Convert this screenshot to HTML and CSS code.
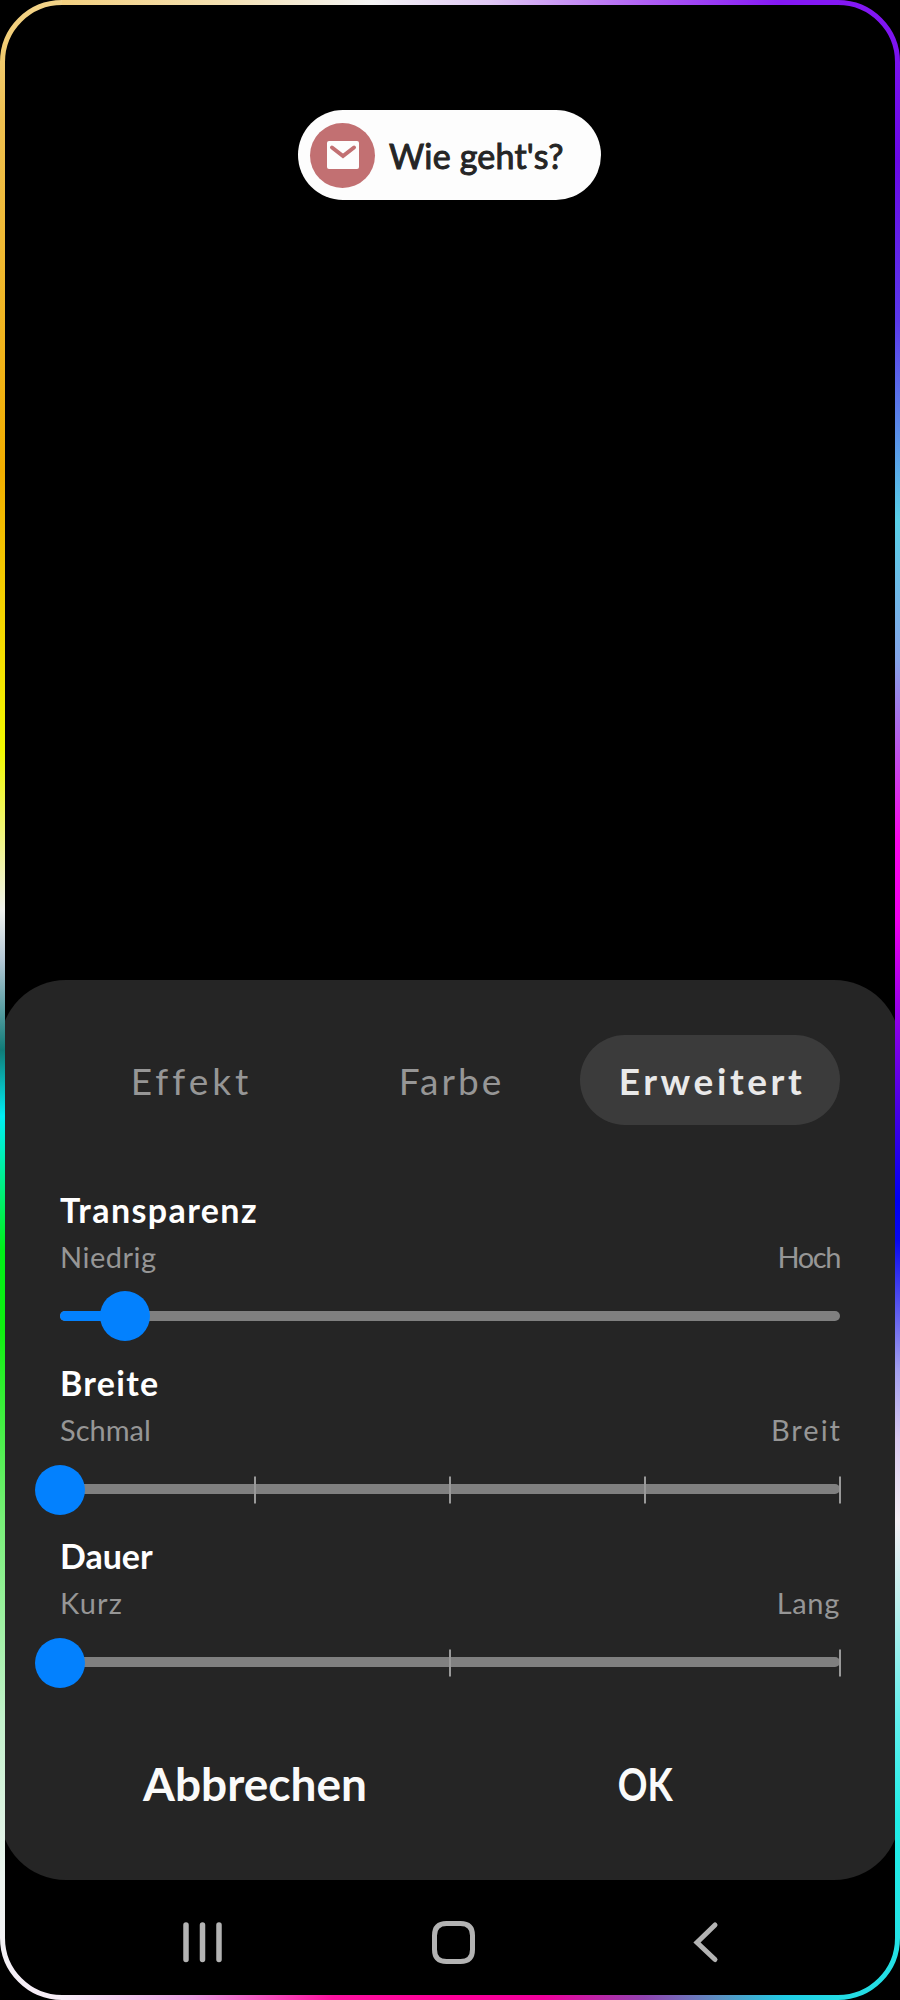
FILE: index.html
```html
<!DOCTYPE html>
<html lang="de">
<head>
<meta charset="utf-8">
<title>Edge-Beleuchtung</title>
<link rel="stylesheet" href="styles.css">
</head>
<body>
<div class="phone">
  <div class="preview">
    <div class="toast">
      <span class="toast-icon">
        <svg width="34" height="30" viewBox="0 0 34 30"><rect x="1" y="1" width="32" height="28" rx="2" fill="#fdfdfd"/><path d="M6 7.500L17 16L28 7.500" fill="none" stroke="#c27072" stroke-width="4" stroke-linecap="round"/></svg>
      </span>
      <span class="toast-text">Wie geht's?</span>
    </div>
  </div>

  <main class="sheet">
    <nav class="tabs">
      <button class="tab t-effekt"><span>Effekt</span></button>
      <button class="tab t-farbe"><span>Farbe</span></button>
      <button class="tab t-erweitert active"><span>Erweitert</span></button>
    </nav>

    <section class="setting">
      <h2 class="name n-transparenz">Transparenz</h2>
      <div class="range"><span class="l-niedrig">Niedrig</span><span class="l-hoch">Hoch</span></div>
      <svg class="slider" width="832" height="54" viewBox="0 0 832 54">
        <rect x="26" y="22" width="780" height="10" rx="5" fill="#808080"/>
        <rect x="26" y="22" width="70" height="10" rx="5" fill="#0381fe"/>
        <circle cx="91" cy="27" r="25" fill="#0381fe"/>
      </svg>
    </section>

    <section class="setting">
      <h2 class="name n-breite">Breite</h2>
      <div class="range"><span class="l-schmal">Schmal</span><span class="l-breit">Breit</span></div>
      <svg class="slider" width="832" height="54" viewBox="0 0 832 54">
        <rect x="26" y="22" width="780" height="10" rx="5" fill="#808080"/>
        <path d="M221 14.500V41.500M416 14.500V41.500M611 14.500V41.500M806 14.500V41.500" stroke="#999" stroke-width="2"/>
        <circle cx="26" cy="28" r="25" fill="#0381fe"/>
      </svg>
    </section>

    <section class="setting">
      <h2 class="name n-dauer">Dauer</h2>
      <div class="range"><span class="l-kurz">Kurz</span><span class="l-lang">Lang</span></div>
      <svg class="slider" width="832" height="54" viewBox="0 0 832 54">
        <rect x="26" y="22" width="780" height="10" rx="5" fill="#808080"/>
        <path d="M416 14.500V41.500M806 14.500V41.500" stroke="#999" stroke-width="2"/>
        <circle cx="26" cy="28" r="25" fill="#0381fe"/>
      </svg>
    </section>

    <div class="actions">
      <button class="action a-cancel"><span>Abbrechen</span></button>
      <button class="action a-ok"><span>OK</span></button>
    </div>
  </main>

  <footer class="navbar">
    <svg width="42" height="44" viewBox="0 0 42 44"><path d="M5 4V38.500M21.500 4V38.500M38 4V38.500" stroke="#b3b3b3" stroke-width="5.500" stroke-linecap="round"/></svg>
    <svg width="46" height="46" viewBox="0 0 46 46"><path d="M14.500 2.500H28.500Q40.500 2.500 40.500 14.500V28.500Q40.500 40.500 28.500 40.500H14.500Q2.500 40.500 2.500 28.500V14.500Q2.500 2.500 14.500 2.500Z" fill="none" stroke="#b3b3b3" stroke-width="5"/></svg>
    <svg width="28" height="44" viewBox="0 0 28 44"><path d="M24 4L6 21.500L24 38.500" fill="none" stroke="#b3b3b3" stroke-width="5" stroke-linecap="round"/></svg>
  </footer>

  <svg class="edge" width="900" height="2000" viewBox="0 0 900 2000" fill="none" stroke-width="5">
    <defs>
      <linearGradient id="left" gradientUnits="userSpaceOnUse" x1="0" y1="0" x2="0" y2="2000">
        <stop offset="0" stop-color="#f3d48a"/><stop offset=".06" stop-color="#efc050"/><stop offset=".235" stop-color="#f2ae00"/><stop offset=".33" stop-color="#f6e000"/><stop offset=".375" stop-color="#f2fa00"/><stop offset=".455" stop-color="#f0f2ee"/><stop offset=".48" stop-color="#b4c8d6"/><stop offset=".525" stop-color="#107c78"/><stop offset=".558" stop-color="#00eef4"/><stop offset=".575" stop-color="#00f0c0"/><stop offset=".625" stop-color="#00f018"/><stop offset=".665" stop-color="#10f010"/><stop offset=".76" stop-color="#78f078"/><stop offset=".86" stop-color="#c4f2cc"/><stop offset=".94" stop-color="#ecf4f0"/><stop offset="1" stop-color="#f8eef8"/>
      </linearGradient>
      <linearGradient id="right" gradientUnits="userSpaceOnUse" x1="0" y1="0" x2="0" y2="2000">
        <stop offset="0" stop-color="#8418f4"/><stop offset=".08" stop-color="#6a08e6"/><stop offset=".16" stop-color="#5a38ea"/><stop offset=".26" stop-color="#58d0e8"/><stop offset=".33" stop-color="#84a4e8"/><stop offset=".42" stop-color="#f808e8"/><stop offset=".46" stop-color="#ee00ea"/><stop offset=".5" stop-color="#a000e8"/><stop offset=".555" stop-color="#4800e4"/><stop offset=".6" stop-color="#0000f2"/><stop offset=".62" stop-color="#0808ee"/><stop offset=".685" stop-color="#a4a0ee"/><stop offset=".72" stop-color="#dccaf0"/><stop offset=".76" stop-color="#f4eef4"/><stop offset=".8" stop-color="#c0f0ee"/><stop offset=".86" stop-color="#60f0ee"/><stop offset=".91" stop-color="#20eee8"/><stop offset="1" stop-color="#24dce4"/>
      </linearGradient>
      <linearGradient id="top" gradientUnits="userSpaceOnUse" x1="60" y1="0" x2="840" y2="0">
        <stop offset="0" stop-color="#f3d080"/><stop offset=".2" stop-color="#f4e0b0"/><stop offset=".4" stop-color="#f4f4f4"/><stop offset=".55" stop-color="#e0c8f4"/><stop offset=".75" stop-color="#b060f4"/><stop offset=".92" stop-color="#8418f4"/><stop offset="1" stop-color="#8418f4"/>
      </linearGradient>
      <linearGradient id="bottom" gradientUnits="userSpaceOnUse" x1="60" y1="0" x2="840" y2="0">
        <stop offset="0" stop-color="#f8eef8"/><stop offset=".17" stop-color="#eca0e0"/><stop offset=".35" stop-color="#fc14a0"/><stop offset=".5" stop-color="#ff0098"/><stop offset=".62" stop-color="#f0009c"/><stop offset=".75" stop-color="#9044b0"/><stop offset=".85" stop-color="#5894c4"/><stop offset=".93" stop-color="#20cce4"/><stop offset="1" stop-color="#24dce4"/>
      </linearGradient>
    </defs>
    <path d="M62 2.500A59.500 59.500 0 0 0 2.500 62V1938A59.500 59.500 0 0 0 62 1997.500" stroke="url(#left)"/>
    <path d="M838 2.500A59.500 59.500 0 0 1 897.500 62V1938A59.500 59.500 0 0 1 838 1997.500" stroke="url(#right)"/>
    <rect x="62" y="0" width="776" height="5" fill="url(#top)"/>
    <rect x="62" y="1995" width="776" height="5" fill="url(#bottom)"/>
  </svg>
</div>
</body>
</html>
```
FILE: styles.css
```css
* { box-sizing: border-box; }
body { margin: 0; background: #000; font-family: Lato, "Open Sans", sans-serif; }
button { font: inherit; border: 0; background: none; padding: 0; color: inherit; white-space: nowrap; }

.phone { position: relative; width: 900px; height: 2000px; overflow: hidden; background: #000; display: flex; flex-direction: column; }
.edge { position: absolute; inset: 0; pointer-events: none; }

.preview { height: 980px; padding: 110px 1px 0 0; display: flex; justify-content: center; align-items: flex-start; }
.toast { width: 303px; height: 90px; border-radius: 45px; background: #fdfdfd; display: flex; align-items: center; padding-left: 12px; gap: 14px; }
.toast-icon { width: 65px; height: 65px; border-radius: 50%; background: #c27072; display: flex; align-items: center; justify-content: center; flex: none; }
.toast-text { color: #252525; font-size: 34px; line-height: 44px; letter-spacing: .2px; white-space: nowrap; padding-top: 1px; -webkit-text-stroke: 1px #252525; }

.sheet { height: 900px; background: #252525; border-radius: 66px; padding: 55px 60px 0; display: flex; flex-direction: column; }
.tabs { height: 90px; display: grid; grid-template-columns: repeat(3, 260px); margin-bottom: 60px; }
.tab { height: 90px; border-radius: 45px; font-size: 37px; color: #969696; }
.tab.active { background: #3b3b3b; color: #e9e9e9; font-weight: 700; }
.t-effekt { letter-spacing: 4px; padding-left: 3px; }
.t-farbe { letter-spacing: 3px; padding-left: 3px; }
.t-erweitert { letter-spacing: 3.600px; padding-left: 4px; }

.setting { height: 173.200px; }
.name { margin: 0; height: 50px; line-height: 50px; font-size: 34px; font-weight: 700; color: #fff; }
.n-transparenz { letter-spacing: 1.400px; }
.n-breite { letter-spacing: 1.300px; }
.range { height: 44px; display: flex; justify-content: space-between; font-size: 29px; line-height: 44px; color: #969696; }
.l-niedrig { letter-spacing: .5px; }
.l-hoch { letter-spacing: -1.400px; }
.l-breit { letter-spacing: 2px; margin-right: -2px; }
.l-kurz { letter-spacing: 1.200px; }
.l-lang { letter-spacing: .7px; }
.slider { display: block; margin: 10px -26px 0; }

.actions { display: grid; grid-template-columns: 390px 390px; height: 90px; margin-top: 34px; }
.action { font-size: 46px; font-weight: 700; color: #fafafa; }
.a-ok span { display: inline-block; transform: scaleX(.8); }

.navbar { height: 120px; padding: 41px 181px 0 181px; display: grid; grid-template-columns: 251px 1fr 28px; }
```
